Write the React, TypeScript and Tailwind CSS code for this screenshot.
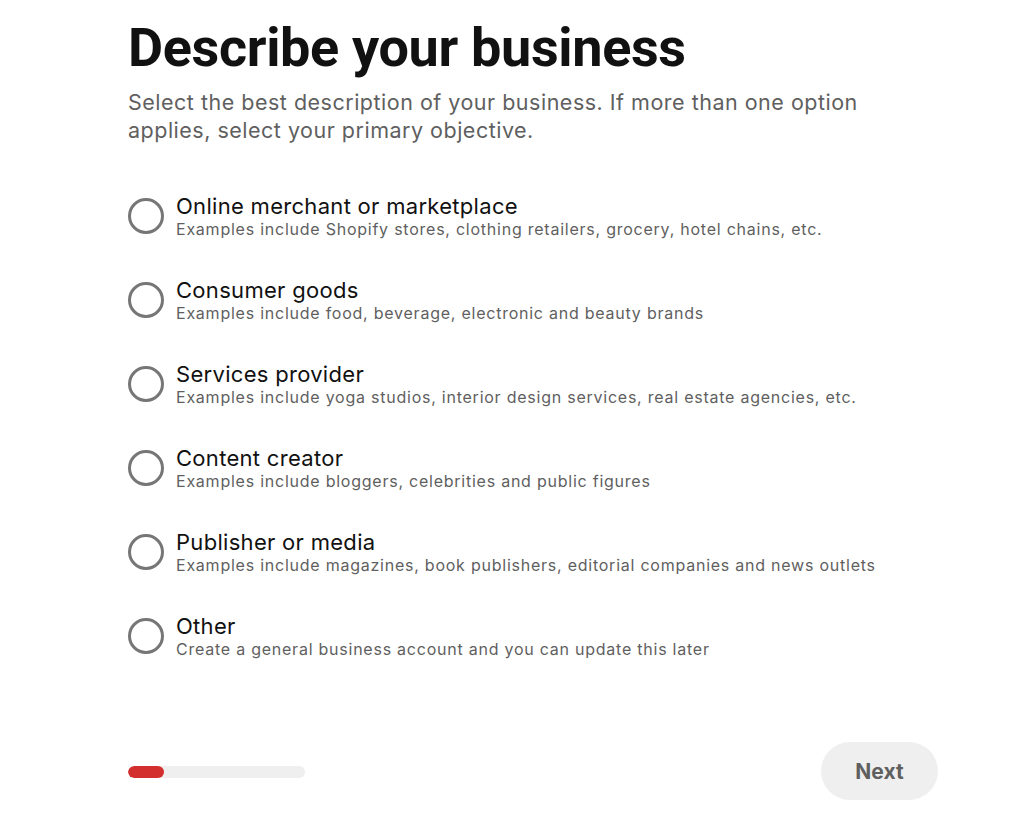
const options = [
  {
    title: "Online merchant or marketplace",
    desc: "Examples include Shopify stores, clothing retailers, grocery, hotel chains, etc.",
  },
  {
    title: "Consumer goods",
    desc: "Examples include food, beverage, electronic and beauty brands",
  },
  {
    title: "Services provider",
    desc: "Examples include yoga studios, interior design services, real estate agencies, etc.",
  },
  {
    title: "Content creator",
    desc: "Examples include bloggers, celebrities and public figures",
  },
  {
    title: "Publisher or media",
    desc: "Examples include magazines, book publishers, editorial companies and news outlets",
  },
  {
    title: "Other",
    desc: "Create a general business account and you can update this later",
  },
];

function OptionRow({ title, desc }: { title: string; desc: string }) {
  return (
    <label className="flex items-center gap-[12px] h-[84px] cursor-pointer">
      <span className="w-[36px] h-[36px] rounded-full border-[3px] border-[#767676] flex-shrink-0" />
      <span className="flex flex-col">
        <span className="text-[22px] leading-[26px] tracking-[0.3px] text-[#111111]">{title}</span>
        <span className="text-[16px] leading-[20px] tracking-[0.76px] text-[#5f5f5f]">{desc}</span>
      </span>
    </label>
  );
}

export default function App() {
  return (
    <div
      className="w-full h-[825px] bg-white flex flex-col"
      style={{ fontFamily: "Inter, 'Noto Sans', sans-serif" }}
    >
      <div className="w-[810px] ml-[128px] flex flex-col flex-1">
        {/* Header */}
        <h1 className="mt-[14px] text-[54px] leading-[68px] font-bold tracking-[-0.35px] text-[#111111] font-[Roboto,sans-serif]">
          Describe your business
        </h1>
        <p className="mt-[6px] max-w-[740px] text-[21.5px] leading-[28px] tracking-[0.5px] text-[#5f5f5f]">
          Select the best description of your business. If more than one option applies, select
          your primary objective.
        </p>

        {/* Options */}
        <div className="mt-[30px] flex flex-col">
          {options.map((o) => (
            <OptionRow key={o.title} title={o.title} desc={o.desc} />
          ))}
        </div>

        {/* Footer */}
        <div className="mt-auto mb-[25px] flex items-center justify-between">
          <div className="w-[177px] h-[12px] mt-[2px] rounded-full bg-[#efefef] overflow-hidden">
            <div className="w-[36px] h-full rounded-full bg-[#d32f2f]" />
          </div>
          <button className="w-[117px] h-[58px] pt-[2px] rounded-full bg-[#efefef] text-[21px] font-bold text-[#5f5f5f]">
            Next
          </button>
        </div>
      </div>
    </div>
  );
}
